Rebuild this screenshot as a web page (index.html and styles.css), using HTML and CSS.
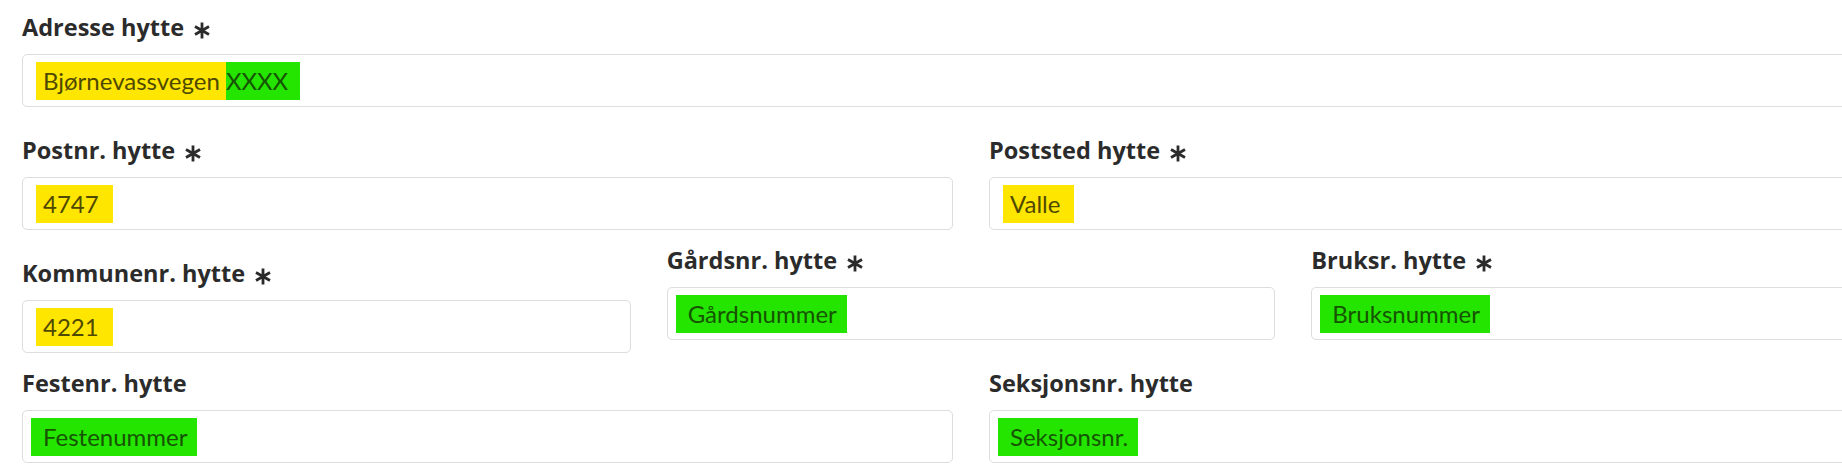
FILE: index.html
```html
<!DOCTYPE html>
<html lang="no">
<head>
<meta charset="utf-8">
<title>Hytte</title>
<link rel="stylesheet" href="styles.css">
</head>
<body>
<div class="form">
  <div class="row one">
    <div class="field">
      <div class="label">Adresse hytte<svg class="req" viewBox="0 0 18 17" width="18" height="17"><path d="M9 0.5V16.5M2 4.5L16 12.5M2 12.5L16 4.5"/></svg></div>
      <div class="input"><span class="hl y">Bjørnevassvegen</span><span class="hl g">XXXX</span></div>
    </div>
  </div>
  <div class="row two">
    <div class="field">
      <div class="label">Postnr. hytte<svg class="req" viewBox="0 0 18 17" width="18" height="17"><path d="M9 0.5V16.5M2 4.5L16 12.5M2 12.5L16 4.5"/></svg></div>
      <div class="input"><span class="hl y">4747</span></div>
    </div>
    <div class="field">
      <div class="label">Poststed hytte<svg class="req" viewBox="0 0 18 17" width="18" height="17"><path d="M9 0.5V16.5M2 4.5L16 12.5M2 12.5L16 4.5"/></svg></div>
      <div class="input"><span class="hl y">Valle</span></div>
    </div>
  </div>
  <div class="row three">
    <div class="field lowered">
      <div class="label">Kommunenr. hytte<svg class="req" viewBox="0 0 18 17" width="18" height="17"><path d="M9 0.5V16.5M2 4.5L16 12.5M2 12.5L16 4.5"/></svg></div>
      <div class="input"><span class="hl y">4221</span></div>
    </div>
    <div class="field">
      <div class="label">Gårdsnr. hytte<svg class="req" viewBox="0 0 18 17" width="18" height="17"><path d="M9 0.5V16.5M2 4.5L16 12.5M2 12.5L16 4.5"/></svg></div>
      <div class="input"><span class="hl g">Gårdsnummer</span></div>
    </div>
    <div class="field">
      <div class="label">Bruksr. hytte<svg class="req" viewBox="0 0 18 17" width="18" height="17"><path d="M9 0.5V16.5M2 4.5L16 12.5M2 12.5L16 4.5"/></svg></div>
      <div class="input"><span class="hl g">Bruksnummer</span></div>
    </div>
  </div>
  <div class="row two">
    <div class="field">
      <div class="label">Festenr. hytte</div>
      <div class="input"><span class="hl g">Festenummer</span></div>
    </div>
    <div class="field">
      <div class="label">Seksjonsnr. hytte</div>
      <div class="input"><span class="hl g">Seksjonsnr.</span></div>
    </div>
  </div>
</div>
</body>
</html>
```
FILE: styles.css
```css
html, body {
  margin: 0;
  padding: 0;
  background: #ffffff;
  overflow: hidden;
}

.form {
  width: 1898px;
  padding: 12px 0 0 22px;
  display: flex;
  flex-direction: column;
  gap: 28px;
}

.row {
  display: grid;
  column-gap: 36px;
  align-items: start;
}

.row.one { grid-template-columns: 1fr; }
.row.two { grid-template-columns: 1fr 1fr; }
.row.three {
  grid-template-columns: 1fr 1fr 1fr;
  margin-top: -13px;
}

.field.lowered {
  margin-top: 13px;
  margin-bottom: -13px;
}

.label {
  font-family: "Open Sans", "Noto Sans", sans-serif;
  font-weight: 700;
  font-size: 23.5px;
  line-height: 30px;
  height: 30px;
  color: #2b2b2b;
  margin-bottom: 12px;
  white-space: nowrap;
}

.req {
  display: inline-block;
  width: 18px;
  height: 17px;
  margin-left: 9px;
  vertical-align: -3px;
  fill: none;
  stroke: #2b2b2b;
  stroke-width: 2.8;
}

.input {
  box-sizing: border-box;
  height: 53px;
  border: 1px solid #dddddd;
  border-radius: 5px;
  background: #ffffff;
  display: flex;
  align-items: center;
  padding-left: 20px;
  font-family: "Lato", "Open Sans", sans-serif;
  font-size: 24px;
  color: #555555;
  white-space: nowrap;
}

.hl {
  display: inline-block;
  line-height: 28px;
  padding: 5px 0;
}

.hl.y {
  background: #ffe600;
  color: #4f4900;
  margin-left: -7px;
  padding-left: 7px;
  padding-right: 14px;
}

.row.one .hl.y {
  padding-right: 6px;
}

.hl.g {
  background: #24e500;
  color: #165400;
  margin-left: -12px;
  padding-left: 12px;
  padding-right: 10px;
}

.hl.y + .hl.g {
  margin-left: 0;
  padding-left: 0;
  padding-right: 12px;
}
```
